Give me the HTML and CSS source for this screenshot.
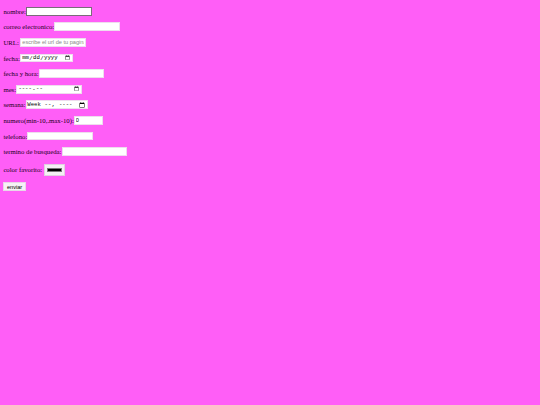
FILE: index.html
```html
<!DOCTYPE html>
<html lang="en-US">
<head>
<meta charset="utf-8">
<title>formulario</title>
<link rel="stylesheet" href="styles.css">
</head>
<body class="page">
<form class="form">
<p class="row"><label for="nombre">nombre:</label><input class="field field-dark" type="text" id="nombre"></p>
<p class="row"><label for="correo">correo electronico:</label><input class="field" type="email" id="correo"></p>
<p class="row"><label for="url">URL:</label><input class="field gap" type="url" id="url" placeholder="escribe el url de tu pagina"></p>
<p class="row"><label for="fecha">fecha:</label><input class="field mono w-date" type="date" id="fecha"></p>
<p class="row"><label for="fechahora">fecha y hora:</label><input class="field" type="datetime" id="fechahora"></p>
<p class="row"><label for="mes">mes:</label><input class="field mono" type="month" id="mes"></p>
<p class="row"><label for="semana">semana:</label><input class="field mono w-week" type="week" id="semana"></p>
<p class="row"><label for="numero">numero(min-10,.max-10):</label><input class="field w-num" type="number" id="numero" min="-10" max="10" value="0"></p>
<p class="row"><label for="telefono">telefono:</label><input class="field" type="tel" id="telefono"></p>
<p class="row"><label for="busqueda">termino de busqueda:</label><input class="field" type="search" id="busqueda"></p>
<p class="row row-color"><label for="color">color favorito:</label><input class="swatch gap" type="color" id="color"></p>
<p class="row"><input class="button" type="submit" value="enviar"></p>
</form>
</body>
</html>
```
FILE: styles.css
```css
html {
  background: #ff5ef7;
}
.page {
  margin: 0;
  background: #ff5ef7;
}
.form {
  zoom: 0.421875;
  padding: 0 8px;
  font-family: "Liberation Serif", serif;
  font-size: 16px;
  color: #1a001a;
}
.row {
  display: flex;
  align-items: center;
  height: 21px;
  margin: 16px 0;
}
.row-color {
  height: 27px;
  margin-top: 19px;
  margin-bottom: 14px;
}
.gap {
  margin-left: 4px;
}
.field {
  box-sizing: border-box;
  width: 156px;
  height: 21px;
  font: 13.333px "Liberation Sans", Arial, sans-serif;
  padding: 1px 2px;
  border: 2px solid #eedcee;
  background: #fff;
  color: #000;
  border-radius: 0;
}
.field-dark {
  border-color: #7a6a7a;
}
.mono {
  font-family: "Liberation Mono", monospace;
}
.w-date {
  width: 126px;
}
.w-week {
  width: 147px;
}
.w-num {
  width: 69px;
}
.field::placeholder {
  color: #8a8a8a;
}
.swatch {
  box-sizing: border-box;
  width: 50px;
  height: 27px;
  padding: 2px 3px;
  border: 2px solid #e0d0e0;
  background: #f4f0f4;
}
.button {
  box-sizing: border-box;
  height: 21px;
  font: 13.333px "Liberation Sans", Arial, sans-serif;
  padding: 1px 6px;
  border: 2px solid #e8d8e8;
  background: #f6f2f6;
  color: #000;
}
```
